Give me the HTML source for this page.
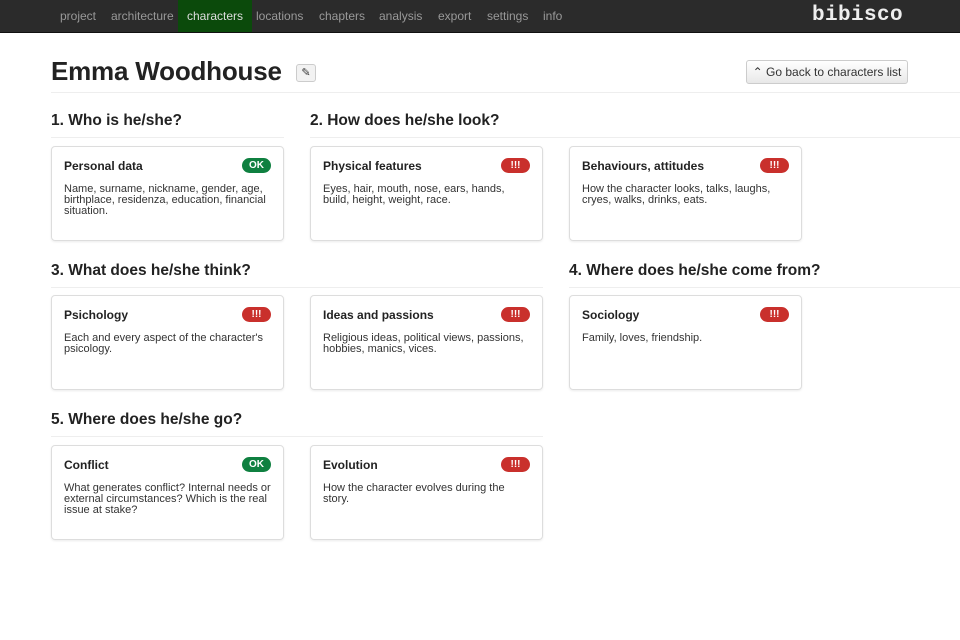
<!DOCTYPE html>
<html><head><style>
*{box-sizing:border-box;margin:0;padding:0}
body{width:960px;height:640px;background:#fff;font-family:"Liberation Sans",Arial,sans-serif;color:#333;position:relative;overflow:hidden}
.nav{position:absolute;left:0;top:0;width:960px;height:33px;background:#2b2b2b;border-bottom:1px solid #111}
.nav a{position:absolute;top:0;height:32px;line-height:32px;font-size:12px;color:#999;text-decoration:none}
.nav .act{background:#0b4a0b;color:#ddd;padding:0 9px}
.logo{position:absolute;left:812px;top:4px;font-family:"Liberation Mono",monospace;font-weight:bold;font-size:21px;color:#eee;letter-spacing:0.4px}
h1{position:absolute;left:51px;top:56px;font-size:26px;font-weight:bold;color:#222;letter-spacing:-0.2px}
.edit{position:absolute;left:296px;top:64px;width:20px;height:18px;border:1px solid #ccc;border-radius:3px;background:#f2f2f2;font-size:11px;text-align:center;line-height:16px}
.back{position:absolute;left:746px;top:60px;width:162px;height:24px;border:1px solid #ccc;border-radius:3px;background:linear-gradient(#fff,#e8e8e8);font-size:12px;line-height:22px;text-align:center;color:#333}
.hr{position:absolute;height:1px;background:#eee}
h2{position:absolute;font-size:15.5px;font-weight:bold;color:#222}
.card{position:absolute;width:233px;height:95px;border:1px solid #ddd;border-radius:4px;box-shadow:0 1px 2px rgba(0,0,0,.08);padding:12px 12px}
.card b{font-size:12px;color:#222;display:block;margin-bottom:11px}
.card p{font-size:11px;line-height:11px;color:#333}
.bd{position:absolute;right:12px;top:11px;width:29px;height:15px;border-radius:8px;color:#fff;font-size:10px;font-weight:bold;text-align:center;line-height:15px}
.ok{background:#0f8040}.no{background:#c9302c}
</style></head><body>
<div class="nav">
<a style="left:60px">project</a><a style="left:111px">architecture</a><a class="act" style="left:178px">characters</a><a style="left:256px">locations</a><a style="left:319px">chapters</a><a style="left:379px">analysis</a><a style="left:438px">export</a><a style="left:487px">settings</a><a style="left:543px">info</a>
<div class="logo">bibisco</div>
</div>
<h1>Emma Woodhouse</h1>
<div class="edit">✎</div>
<div class="back">⌃ Go back to characters list</div>
<div class="hr" style="left:51px;top:92px;width:909px"></div>

<h2 style="left:51px;top:112px">1. Who is he/she?</h2>
<h2 style="left:310px;top:112px">2. How does he/she look?</h2>
<div class="hr" style="left:51px;top:137px;width:233px"></div>
<div class="hr" style="left:310px;top:137px;width:650px"></div>
<div class="card" style="left:51px;top:146px"><b>Personal data</b><span class="bd ok">OK</span><p>Name, surname, nickname, gender, age, birthplace, residenza, education, financial situation.</p></div>
<div class="card" style="left:310px;top:146px"><b>Physical features</b><span class="bd no">!!!</span><p>Eyes, hair, mouth, nose, ears, hands, build, height, weight, race.</p></div>
<div class="card" style="left:569px;top:146px"><b>Behaviours, attitudes</b><span class="bd no">!!!</span><p>How the character looks, talks, laughs, cryes, walks, drinks, eats.</p></div>

<h2 style="left:51px;top:262px">3. What does he/she think?</h2>
<h2 style="left:569px;top:262px">4. Where does he/she come from?</h2>
<div class="hr" style="left:51px;top:287px;width:492px"></div>
<div class="hr" style="left:569px;top:287px;width:391px"></div>
<div class="card" style="left:51px;top:295px"><b>Psichology</b><span class="bd no">!!!</span><p>Each and every aspect of the character's psicology.</p></div>
<div class="card" style="left:310px;top:295px"><b>Ideas and passions</b><span class="bd no">!!!</span><p>Religious ideas, political views, passions, hobbies, manics, vices.</p></div>
<div class="card" style="left:569px;top:295px"><b>Sociology</b><span class="bd no">!!!</span><p>Family, loves, friendship.</p></div>

<h2 style="left:51px;top:411px">5. Where does he/she go?</h2>
<div class="hr" style="left:51px;top:436px;width:492px"></div>
<div class="card" style="left:51px;top:445px"><b>Conflict</b><span class="bd ok">OK</span><p>What generates conflict? Internal needs or external circumstances? Which is the real issue at stake?</p></div>
<div class="card" style="left:310px;top:445px"><b>Evolution</b><span class="bd no">!!!</span><p>How the character evolves during the story.</p></div>
</body></html>
